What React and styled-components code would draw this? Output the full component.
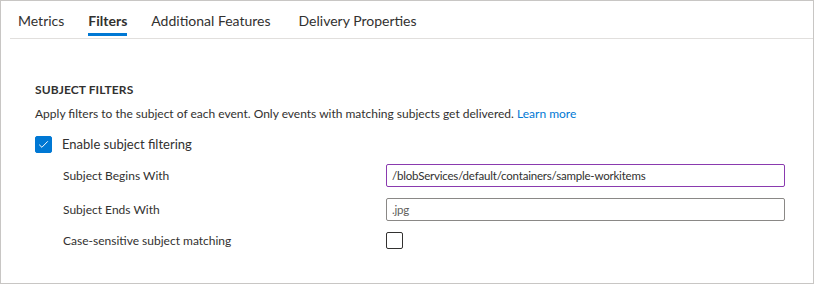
import React, { useState } from "react";
import styled, { createGlobalStyle } from "styled-components";

const GlobalStyle = createGlobalStyle`
  html, body {
    margin: 0;
    padding: 0;
    background: #ffffff;
  }
  body {
    font-family: "Segoe UI", Lato, "Open Sans", sans-serif;
    color: #323130;
  }
`;

const Frame = styled.div`
  width: 814px;
  height: 284px;
  box-sizing: border-box;
  border: 1px solid #c8c6c4;
  display: flex;
  flex-direction: column;
`;

const TabBar = styled.nav`
  display: flex;
  gap: 24px;
  height: 37px;
  margin-left: 9px;
  padding-left: 8px;
  border-bottom: 1px solid #e1dfdd;
`;

const Tab = styled.div`
  position: relative;
  font-size: 14px;
  line-height: 20px;
  padding-top: 10px;
  margin-right: ${(p) => p.$extra || 0}px;
  font-weight: ${(p) => (p.$active ? 700 : 400)};
  color: #323130;
  cursor: pointer;

  &::after {
    content: "";
    position: absolute;
    left: 0;
    right: 0;
    top: 32px;
    height: 3px;
    background: ${(p) => (p.$active ? "#0078d4" : "transparent")};
  }
`;

const Body = styled.section`
  padding: 43px 0 0 34px;
`;

const Heading = styled.h2`
  margin: 0;
  font-size: 12px;
  line-height: 16px;
  font-weight: 700;
  letter-spacing: 0.1px;
`;

const Description = styled.p`
  margin: 8px 0 0;
  font-size: 12px;
  line-height: 16px;
`;

const Link = styled.a`
  color: #0078d4;
  text-decoration: none;
`;

const CheckRow = styled.label`
  display: flex;
  align-items: center;
  gap: 10px;
  margin-top: 13px;
  font-size: 13px;
  line-height: 18px;
`;

const Box = styled.span`
  width: 17px;
  height: 17px;
  box-sizing: border-box;
  border-radius: 2px;
  border: 1px solid ${(p) => (p.$checked ? "#0078d4" : "#323130")};
  background: ${(p) => (p.$checked ? "#0078d4" : "#ffffff")};
  display: flex;
  align-items: center;
  justify-content: center;
  flex-shrink: 0;
`;

const Fields = styled.div`
  display: grid;
  grid-template-columns: 323px 399px;
  row-gap: 11px;
  margin-top: 11px;
  padding-left: 28px;
  align-items: center;
`;

const FieldLabel = styled.span`
  font-size: 12px;
  line-height: 16px;
`;

const TextInput = styled.input`
  box-sizing: border-box;
  width: 399px;
  height: 23px;
  padding: 0 5px;
  border: 1px solid ${(p) => (p.$focused ? "#8a3aaf" : "#8a8886")};
  border-radius: 2px;
  font-family: inherit;
  font-size: 11.5px;
  letter-spacing: -0.2px;
  color: ${(p) => (p.$muted ? "#605e5c" : "#323130")};
  outline: none;
  background: #ffffff;
`;

const Check = ({ checked }) => (
  <Box $checked={checked}>
    {checked && (
      <svg width="11" height="9" viewBox="0 0 11 9" fill="none">
        <path d="M1.2 4.7 L3.9 7.3 L9.8 1.3" stroke="#ffffff" strokeWidth="1" />
      </svg>
    )}
  </Box>
);

const tabs = [
  { name: "Metrics" },
  { name: "Filters" },
  { name: "Additional Features", extra: 4 },
  { name: "Delivery Properties" },
];

export default function App() {
  const [active] = useState("Filters");
  return (
    <>
      <GlobalStyle />
      <Frame>
        <TabBar>
          {tabs.map((t) => (
            <Tab key={t.name} $active={t.name === active} $extra={t.extra}>
              {t.name}
            </Tab>
          ))}
        </TabBar>
        <Body>
          <Heading>SUBJECT FILTERS</Heading>
          <Description>
            Apply filters to the subject of each event. Only events with matching subjects get delivered.{" "}
            <Link href="#">Learn more</Link>
          </Description>
          <CheckRow>
            <Check checked />
            Enable subject filtering
          </CheckRow>
          <Fields>
            <FieldLabel>Subject Begins With</FieldLabel>
            <TextInput $focused defaultValue="/blobServices/default/containers/sample-workitems" />
            <FieldLabel>Subject Ends With</FieldLabel>
            <TextInput $muted defaultValue=".jpg" />
            <FieldLabel>Case-sensitive subject matching</FieldLabel>
            <Check checked={false} />
          </Fields>
        </Body>
      </Frame>
    </>
  );
}
